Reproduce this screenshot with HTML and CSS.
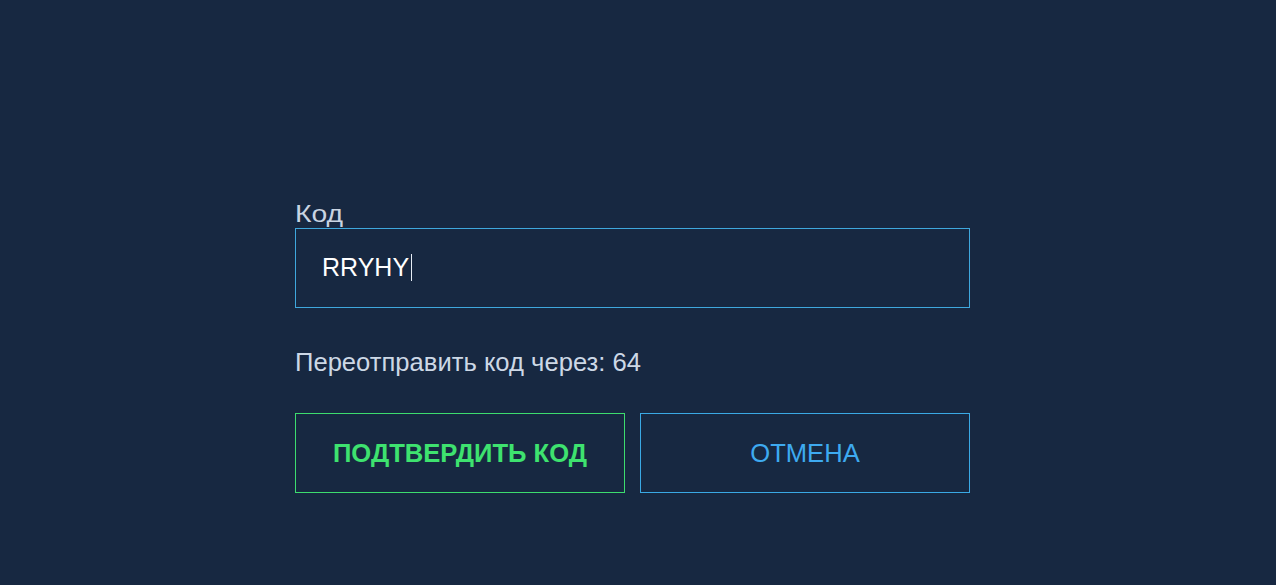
FILE: index.html
```html
<!DOCTYPE html>
<html lang="ru">
<head>
<meta charset="utf-8">
<title>Код</title>
<link rel="stylesheet" href="styles.css">
</head>
<body>
<main class="page">
  <form class="form">
    <div class="label-row"><label class="label">Код</label></div>
    <div class="field"><span class="value">RRYHY</span><span class="caret"></span></div>
    <p class="resend">Переотправить код через: 64</p>
    <div class="actions">
      <button type="button" class="btn btn-confirm">ПОДТВЕРДИТЬ КОД</button>
      <button type="button" class="btn btn-cancel">ОТМЕНА</button>
    </div>
  </form>
</main>
</body>
</html>
```
FILE: styles.css
```css
html, body {
  margin: 0;
  padding: 0;
  background: #172841;
  height: 100%;
}
body {
  font-family: "Liberation Sans", Arial, sans-serif;
}
.page {
  padding-top: 202px;
  padding-left: 295px;
}
.form {
  width: 675px;
  display: flex;
  flex-direction: column;
}
.label-row {
  height: 24px;
  margin-bottom: 2px;
}
.label {
  display: inline-block;
  font-size: 24px;
  line-height: 24px;
  color: #c9d4e2;
  transform: scaleX(1.18);
  transform-origin: left center;
}
.field {
  box-sizing: border-box;
  height: 80px;
  border: 1px solid #3fa7dc;
  display: flex;
  align-items: center;
  padding-left: 26px;
  padding-bottom: 2px;
  font-size: 25px;
  color: #ffffff;
}
.caret {
  display: inline-block;
  width: 1px;
  height: 27px;
  background: #e6edf5;
  margin-left: 2px;
}
.resend {
  margin: 40px 0 0;
  font-size: 25.6px;
  line-height: 28px;
  color: #cdd8e6;
}
.actions {
  margin-top: 37px;
  display: flex;
  gap: 15px;
}
.btn {
  box-sizing: border-box;
  width: 330px;
  height: 80px;
  background: transparent;
  font-family: "Liberation Sans", Arial, sans-serif;
  font-size: 25.6px;
  padding: 0;
  cursor: pointer;
}
.btn-confirm {
  border: 1px solid #3ddc6e;
  color: #3ee26f;
  font-weight: bold;
}
.btn-cancel {
  border: 1px solid #3aa9e4;
  color: #3eaaf0;
}
```
